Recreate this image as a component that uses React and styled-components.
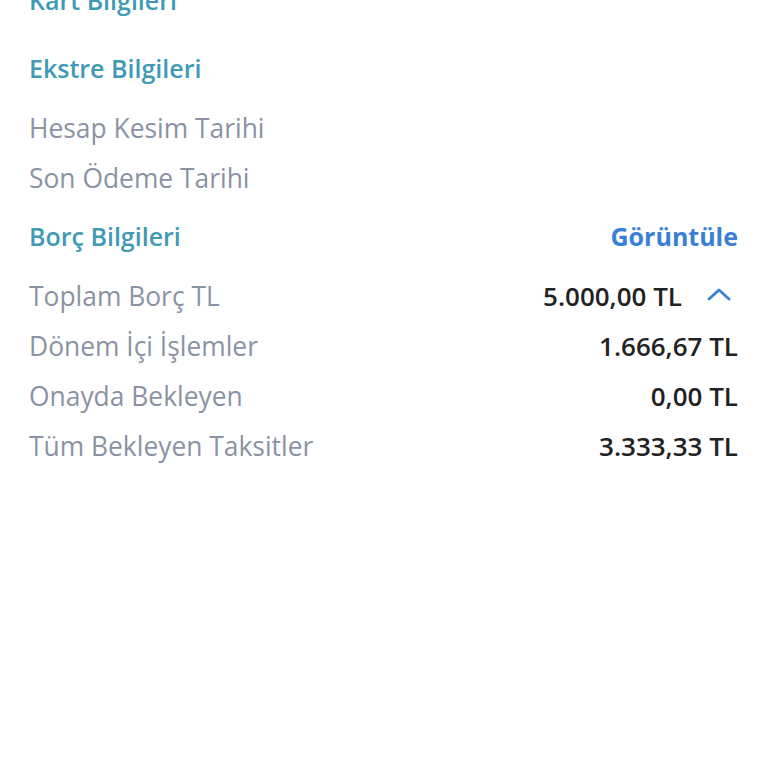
import React from "react";
import styled, { createGlobalStyle } from "styled-components";

const GlobalStyle = createGlobalStyle`
  html, body {
    margin: 0;
    padding: 0;
    background: #ffffff;
  }
  body {
    font-family: "Open Sans", "Noto Sans", sans-serif;
    overflow: hidden;
  }
`;

const sections = [
  { title: "Kart Bilgileri", rows: [] },
  {
    title: "Ekstre Bilgileri",
    rows: [{ label: "Hesap Kesim Tarihi" }, { label: "Son Ödeme Tarihi" }],
  },
  {
    title: "Borç Bilgileri",
    action: "Görüntüle",
    rows: [
      { label: "Toplam Borç TL", value: "5.000,00 TL", toggle: true },
      { label: "Dönem İçi İşlemler", value: "1.666,67 TL" },
      { label: "Onayda Bekleyen", value: "0,00 TL" },
      { label: "Tüm Bekleyen Taksitler", value: "3.333,33 TL" },
    ],
  },
];

const Page = styled.div`
  margin-top: -33px;
  padding: 0 30px 0 29px;
  min-height: 800px;
`;

const SectionHeader = styled.div`
  display: flex;
  align-items: center;
  justify-content: space-between;
  padding: 8px 0 10px;
  line-height: 50px;
`;

const SectionTitle = styled.h2`
  margin: 0;
  font-size: 25px;
  font-weight: 600;
  color: #409ab6;
`;

const ActionLink = styled.a`
  font-size: 25px;
  font-weight: 700;
  color: #3a7fd6;
  text-decoration: none;
`;

const Row = styled.div`
  display: flex;
  align-items: center;
  justify-content: space-between;
  line-height: 50px;
`;

const Label = styled.span`
  font-size: 26.4px;
  color: #8a93a3;
`;

const Value = styled.span`
  display: flex;
  align-items: center;
  gap: 24px;
  font-size: 26px;
  font-weight: 600;
  color: #222222;
`;

const Chevron = styled.svg`
  margin-right: 6px;
  margin-top: -4px;
`;

const ChevronUp = () => (
  <Chevron width="26" height="16" viewBox="0 0 26 16" fill="none">
    <path
      d="M3 13 L13 4 L23 13"
      stroke="#3a7fd6"
      strokeWidth="2.8"
      strokeLinecap="round"
      strokeLinejoin="round"
    />
  </Chevron>
);

export default function App() {
  return (
    <>
      <GlobalStyle />
      <Page>
        {sections.map((section) => (
          <section key={section.title}>
            <SectionHeader>
              <SectionTitle>{section.title}</SectionTitle>
              {section.action && <ActionLink>{section.action}</ActionLink>}
            </SectionHeader>
            {section.rows.map((row) => (
              <Row key={row.label}>
                <Label>{row.label}</Label>
                {row.value && (
                  <Value>
                    {row.value}
                    {row.toggle && <ChevronUp />}
                  </Value>
                )}
              </Row>
            ))}
          </section>
        ))}
      </Page>
    </>
  );
}
